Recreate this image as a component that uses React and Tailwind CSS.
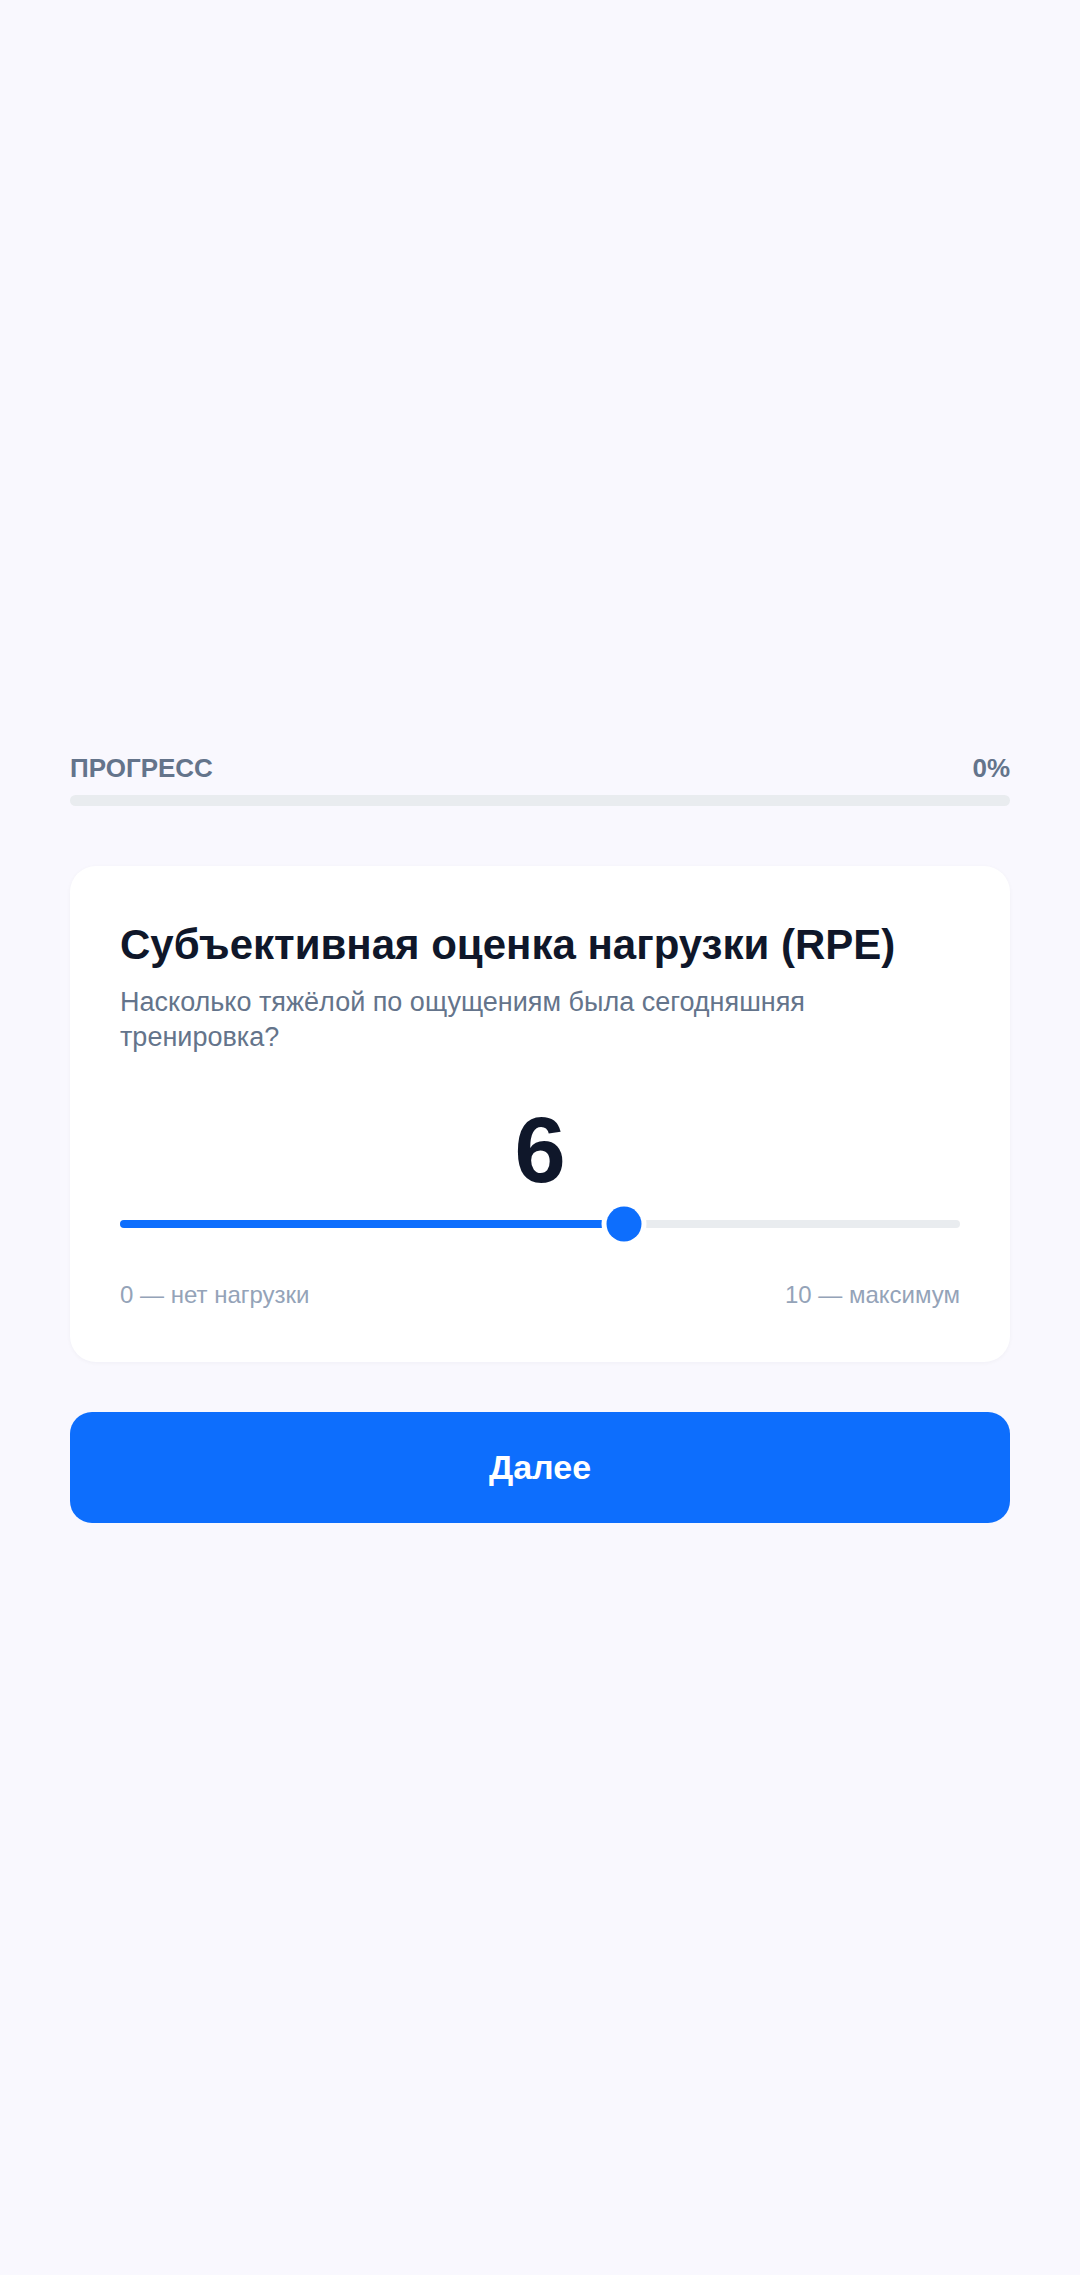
import React from "react";

export default function App() {
  const value = 6;
  const pct = (value / 10) * 100;
  return (
    <div
      className="min-h-[2275px] w-full bg-[#f9f8fe] flex flex-col justify-center px-[70px]"
      style={{ fontFamily: '"Liberation Sans", Arial, sans-serif' }}
    >
      <div className="flex flex-col">
        <div className="flex items-center justify-between text-[26px] font-bold text-[#64748b] leading-[30px]">
          <span>ПРОГРЕСС</span>
          <span>0%</span>
        </div>
        <div className="mt-[12px] h-[11px] w-full rounded-full bg-[#e9ecef]">
          <div className="h-full w-0 rounded-full bg-[#0d6efd]" />
        </div>

        <div className="mt-[60px] rounded-[26px] bg-white px-[50px] pt-[54px] pb-[53px] shadow-[0_1px_4px_rgba(15,23,42,0.04)]">
          <h1 className="text-[42px] font-bold leading-[50px] text-[#0f172a]">
            Субъективная оценка нагрузки (RPE)
          </h1>
          <p className="mt-[15px] text-[27px] leading-[35px] text-[#64748b]">
            Насколько тяжёлой по ощущениям была сегодняшняя тренировка?
          </p>

          <div className="mt-[45px] text-center text-[92px] font-bold leading-[100px] text-[#0f172a]">
            {value}
          </div>

          <div className="relative mt-[20px] h-[8px] w-full rounded-full bg-[#e9ecef]">
            <div
              className="absolute left-0 top-0 h-full rounded-full bg-[#0d6efd]"
              style={{ width: `${pct}%` }}
            />
            <div
              className="absolute top-1/2 h-[35px] w-[35px] -translate-x-1/2 -translate-y-1/2 rounded-full bg-[#0d6efd] shadow-[0_0_0_5px_#ffffff]"
              style={{ left: `${pct}%` }}
            />
          </div>

          <div className="mt-[53px] flex items-center justify-between text-[24px] leading-[28px] text-[#94a3b8]">
            <span>0 — нет нагрузки</span>
            <span>10 — максимум</span>
          </div>
        </div>

        <button className="mt-[50px] h-[111px] w-full rounded-[22px] bg-[#0d6efd] text-[34px] font-bold text-white">
          Далее
        </button>
      </div>
    </div>
  );
}
